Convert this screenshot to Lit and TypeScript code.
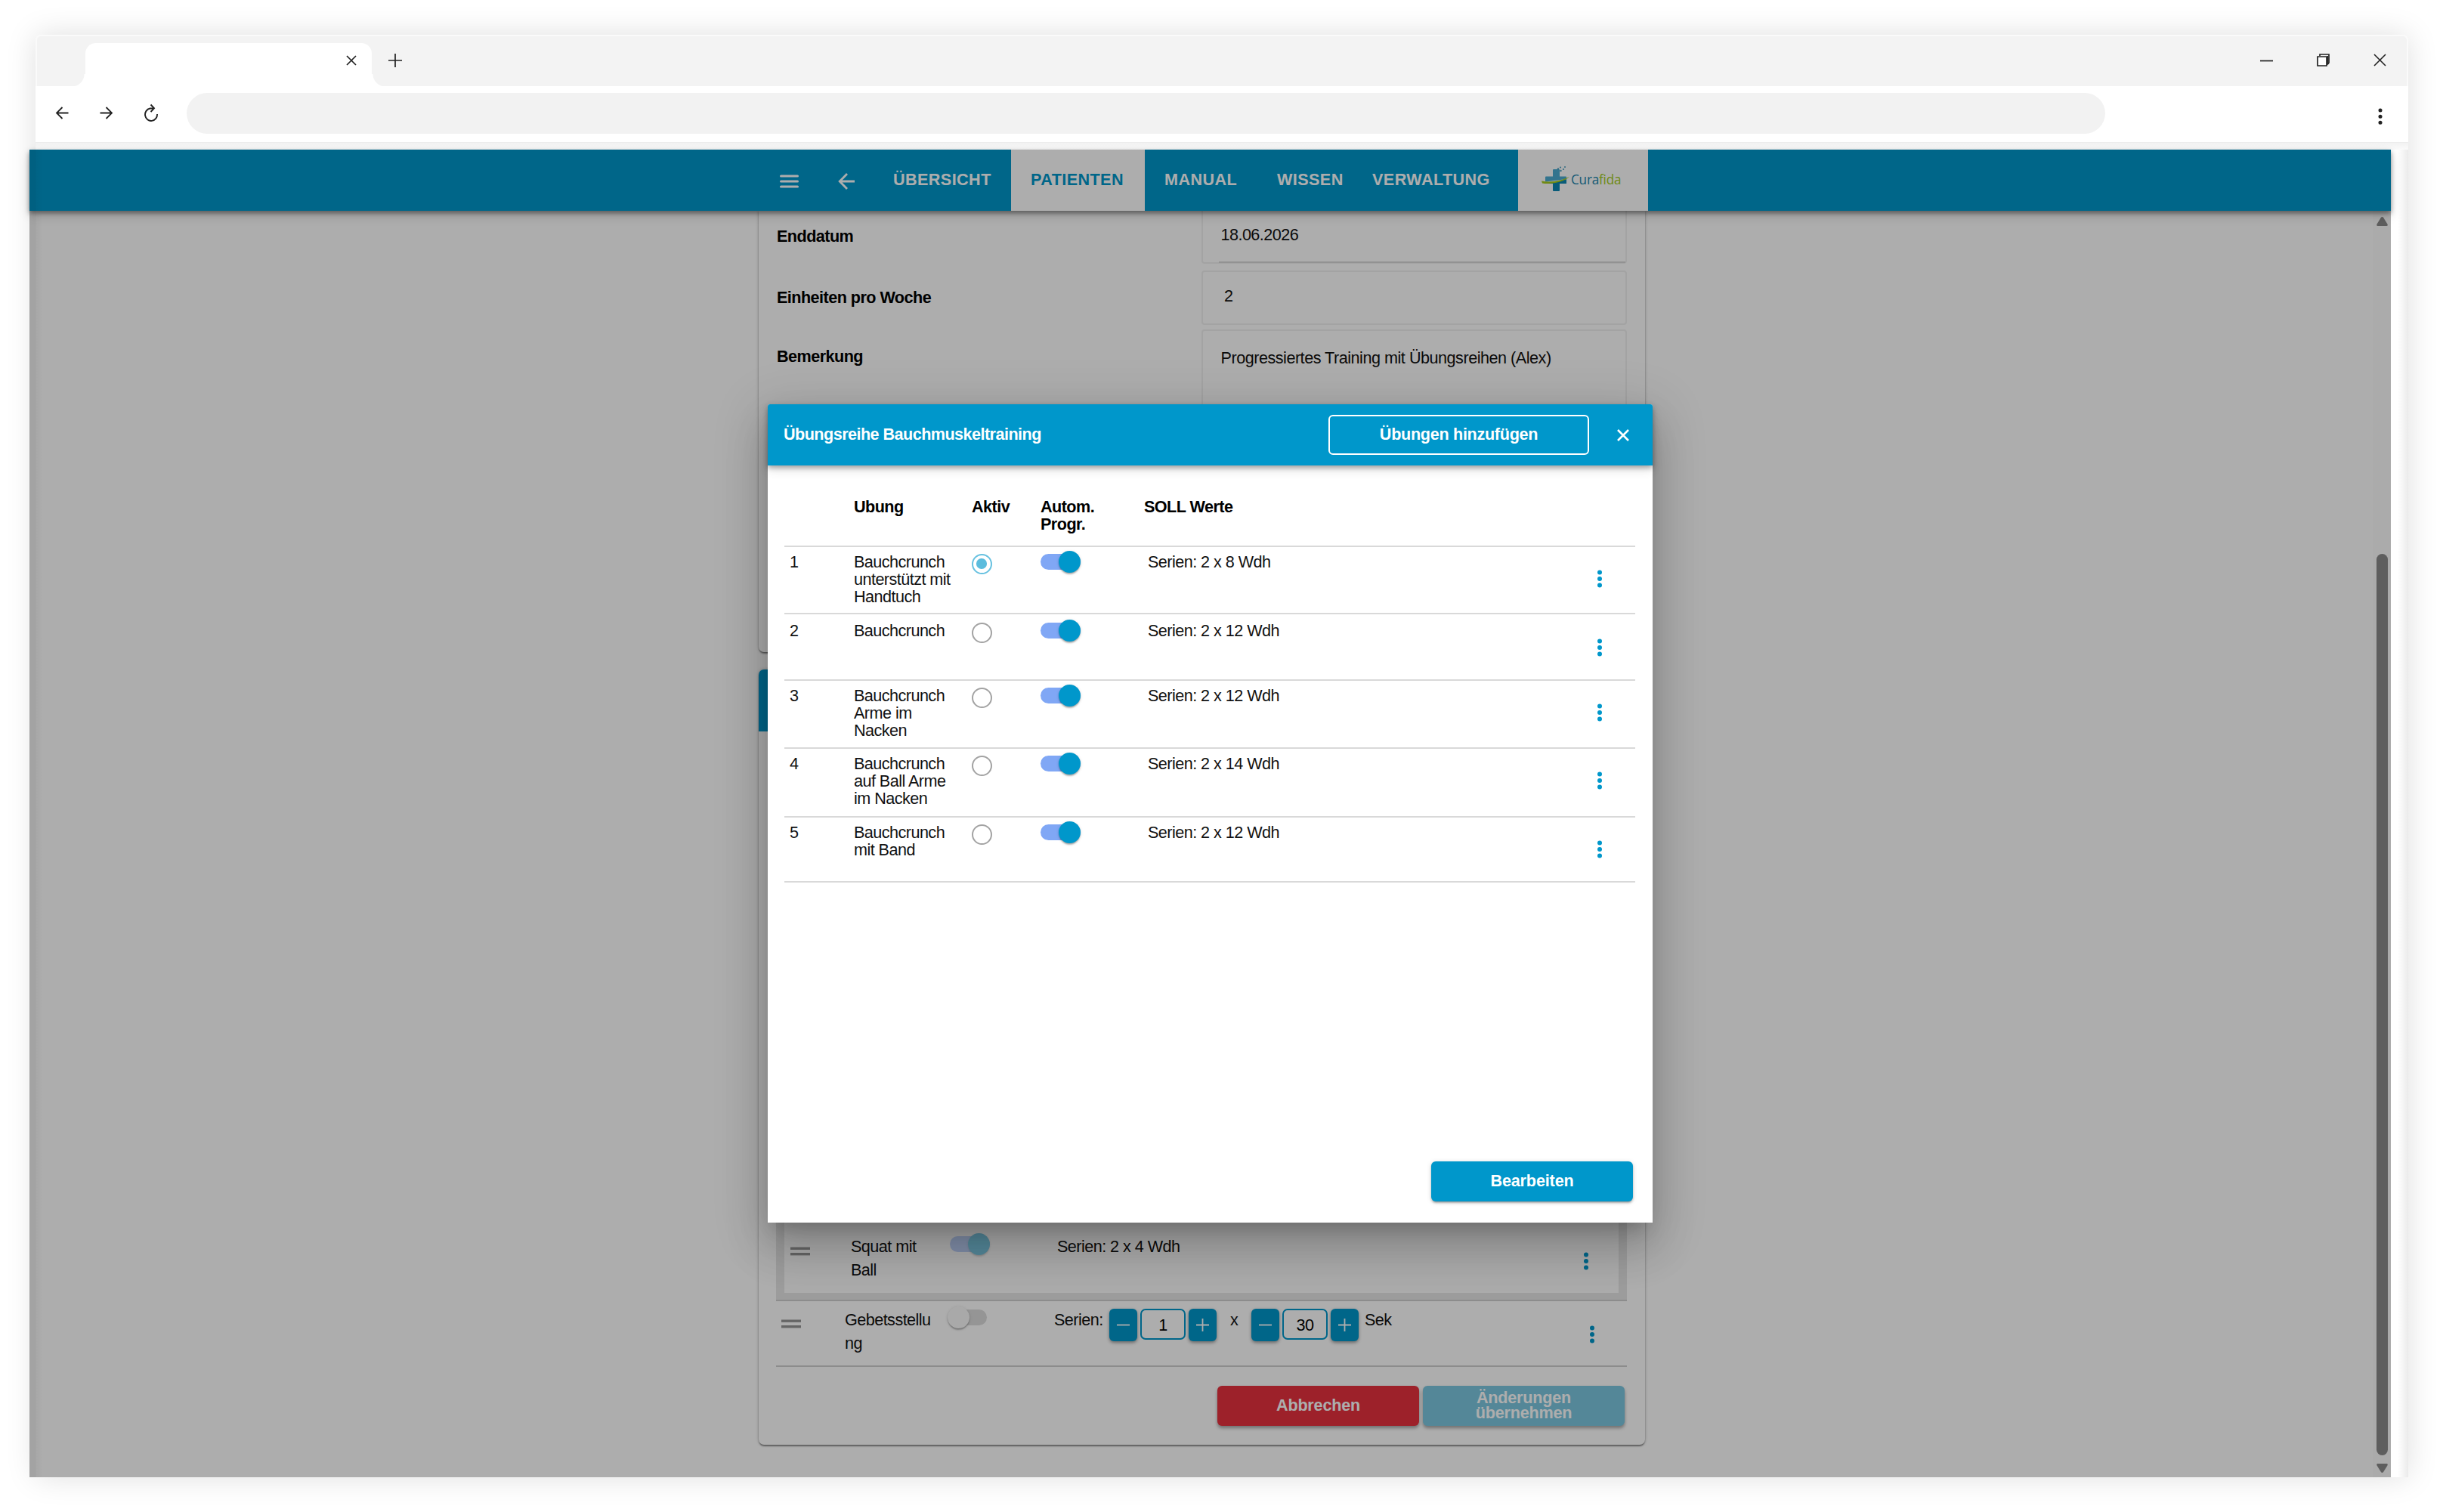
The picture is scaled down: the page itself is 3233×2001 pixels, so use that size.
import { LitElement, html, css, svg } from "lit";
import { customElement, property } from "lit/decorators.js";

interface Exercise {
  lines: string[];
  active: boolean;
  target: string;
  height: number;
  pad: number;
}

const EXERCISES: Exercise[] = [
  { lines: ["Bauchcrunch", "unterstützt mit", "Handtuch"], active: true, target: "Serien: 2 x 8 Wdh", height: 89, pad: 8 },
  { lines: ["Bauchcrunch"], active: false, target: "Serien: 2 x 12 Wdh", height: 88, pad: 10 },
  { lines: ["Bauchcrunch", "Arme im", "Nacken"], active: false, target: "Serien: 2 x 12 Wdh", height: 90, pad: 8 },
  { lines: ["Bauchcrunch", "auf Ball Arme", "im Nacken"], active: false, target: "Serien: 2 x 14 Wdh", height: 91, pad: 8 },
  { lines: ["Bauchcrunch", "mit Band"], active: false, target: "Serien: 2 x 12 Wdh", height: 86, pad: 8 },
];

const stack = (lines: string[]) => lines.map((line) => html`<div>${line}</div>`);

@customElement("more-dots")
class MoreDots extends LitElement {
  static styles = css`
    :host { display: block; width: 8px; height: 26px; }
    svg { display: block; }
  `;
  render() {
    return html`<svg width="8" height="26" viewBox="0 0 8 26" fill="#0097cb">
      <circle cx="4" cy="4.4" r="3" /><circle cx="4" cy="13" r="3" /><circle cx="4" cy="21.6" r="3" />
    </svg>`;
  }
}

@customElement("slide-toggle")
class SlideToggle extends LitElement {
  @property({ type: Boolean, reflect: true }) checked = false;
  @property({ type: Boolean, reflect: true }) disabled = false;
  static styles = css`
    :host { display: flex; align-items: center; width: 53px; height: 30px; }
    :host([disabled]) { opacity: 0.5; }
    .track { width: 53px; height: 21px; border-radius: 11px; background: #9e9e9e; display: flex; align-items: center; }
    :host(:not([checked])) .track { background: #dcdcdc; }
    :host([checked]) .track { background: #80a7f5; justify-content: flex-end; }
    .knob {
      flex: none; width: 29px; height: 29px; border-radius: 50%; background: #fafafa;
      box-shadow: 0 3px 2px -1px rgba(0,0,0,.2), 0 1px 2px rgba(0,0,0,.14), 0 1px 4px rgba(0,0,0,.12);
    }
    :host([checked]) .knob { background: #0097cb; }
  `;
  render() {
    return html`<div class="track"><div class="knob"></div></div>`;
  }
}

@customElement("number-stepper")
class NumberStepper extends LitElement {
  @property() value = "";
  static styles = css`
    :host { display: flex; gap: 4px; }
    .btn {
      width: 37px; height: 43px; border-radius: 6px; background: #0097cb; display: flex;
      align-items: center; justify-content: center; box-shadow: 0 2px 4px rgba(0,0,0,.4);
    }
    .value {
      box-sizing: border-box; width: 60px; height: 41px; border: 2px solid #0097cb; border-radius: 7px;
      text-align: center; line-height: 40px; background: #fff; color: #000;
    }
  `;
  render() {
    return html`
      <div class="btn"><svg width="19" height="19" viewBox="0 0 19 19" stroke="#fff" stroke-width="1.8"><path d="M1 9.5h17" /></svg></div>
      <div class="value">${this.value}</div>
      <div class="btn"><svg width="19" height="19" viewBox="0 0 19 19" stroke="#fff" stroke-width="1.8"><path d="M1 9.5h17M9.5 1v17" /></svg></div>
    `;
  }
}

@customElement("exercise-dialog")
class ExerciseDialog extends LitElement {
  static styles = css`
    :host {
      display: flex; flex-direction: column; background: #fff; border-radius: 3px 3px 0 0; overflow: visible;
      box-shadow: 0 16px 22px -10px rgba(0,0,0,.2), 0 35px 55px 4px rgba(0,0,0,.14), 0 13px 67px 12px rgba(0,0,0,.12);
    }
    .bar {
      height: 81px; flex: none; background: #0097cb; color: #fff; display: flex; align-items: center;
      padding: 0 31px 0 21px; box-sizing: border-box; font-weight: bold; border-radius: 3px 3px 0 0;
      box-shadow: 0 3px 6px rgba(0,0,0,.3), 0 6px 14px rgba(0,0,0,.12);
    }
    .title { flex: 1; line-height: 24px; padding-bottom: 2px; }
    .add {
      box-sizing: border-box; width: 345px; height: 53px; border: 2px solid #fff; border-radius: 6px;
      text-align: center; line-height: 47px; letter-spacing: -.3px; margin-right: 37px;
    }
    .body { flex: 1; padding: 43px 23px 0 22px; display: flex; flex-direction: column; }
    .head, .row { display: grid; grid-template-columns: 92px 155px 92px 137px 1fr 71px; line-height: 23px; }
    .head { height: 63px; font-weight: bold; }
    .row { box-sizing: border-box; border-top: 2px solid #d9d9d9; color: #111; }
    .list { border-bottom: 2px solid #d9d9d9; }
    .num { padding-left: 7px; }
    .active { padding-left: 1px; }
    .target { padding-left: 5px; }
    .head .target { padding-left: 0; }
    .radio {
      box-sizing: border-box; width: 27px; height: 27px; border-radius: 50%; border: 2px solid #a3a3a3;
      margin: 0.5px 0 0 0.5px; display: flex; align-items: center; justify-content: center;
    }
    .radio.on { border-color: #66c1e0; }
    .dot { width: 13.5px; height: 13.5px; border-radius: 50%; background: #5bbcdd; }
    slide-toggle { margin-top: -4px; }
    more-dots { margin: 21px 0 0 20px; }
    .foot { margin-top: auto; display: flex; justify-content: flex-end; padding: 0 3px 28px 0; }
    .edit {
      width: 267px; height: 53px; border-radius: 6px; background: #0097cb; color: #fff; font-weight: bold;
      text-align: center; line-height: 51px; letter-spacing: -.15px;
      box-shadow: 0 4px 2px -3px rgba(0,0,0,.2), 0 2px 3px rgba(0,0,0,.24), 0 1px 7px rgba(0,0,0,.12);
    }
  `;
  render() {
    return html`
      <div class="bar">
        <div class="title">Übungsreihe Bauchmuskeltraining</div>
        <div class="add">Übungen hinzufügen</div>
        <svg width="16" height="16" viewBox="0 0 16 16" stroke="#fff" stroke-width="2.6"><path d="M1 1l14 14M15 1L1 15" /></svg>
      </div>
      <div class="body">
        <div class="head">
          <div></div><div>Ubung</div><div class="active">Aktiv</div><div>${stack(["Autom.", "Progr."])}</div><div class="target">SOLL Werte</div>
        </div>
        <div class="list">
          ${EXERCISES.map((e, i) => html`
            <div class="row" style="height:${e.height}px;padding-top:${e.pad}px">
              <div class="num">${i + 1}</div>
              <div>${stack(e.lines)}</div>
              <div class="radio ${e.active ? "on" : ""}">${e.active ? html`<div class="dot"></div>` : ""}</div>
              <slide-toggle checked></slide-toggle>
              <div class="target">${e.target}</div>
              <more-dots></more-dots>
            </div>`)}
        </div>
        <div class="foot"><div class="edit">Bearbeiten</div></div>
      </div>
    `;
  }
}

const handle = svg`<svg width="26" height="12" viewBox="0 0 26 12" fill="#979797"><rect y="0.5" width="26" height="3.4" /><rect y="8" width="26" height="3.4" /></svg>`;

@customElement("app-root")
class AppRoot extends LitElement {
  static styles = css`
    :host {
      display: block; box-sizing: border-box; width: 3233px; height: 2001px; overflow: hidden; background: #fff;
      font: 21.6px "Liberation Sans", Arial, sans-serif; letter-spacing: -.54px; color: #000; padding: 46px 46px 46px 47px;
    }
    svg { display: block; flex: none; }
    .window { height: 1909px; border-radius: 7px 7px 0 0; box-shadow: 0 0 40px rgba(0,0,0,.13); background: #fff; display: flex; flex-direction: column; }
    .strip {
      height: 68px; flex: none; box-sizing: border-box; background: #f3f3f3; border: 2px solid #fafafa; border-bottom: 0;
      border-radius: 7px 7px 0 0; display: flex; align-items: flex-end; padding-left: 46px;
    }
    .flare { width: 18px; height: 16px; flex: none; }
    .flare.l { background: radial-gradient(circle at 0 0, transparent 16px, #fff 17px); }
    .flare.r { background: radial-gradient(circle at 100% 0, transparent 16px, #fff 17px); }
    .tab {
      width: 379px; height: 57px; box-sizing: border-box; background: #fff; border-radius: 14px 14px 0 0; display: flex; justify-content: flex-end;
      padding: 16px 20px 0 0;
    }
    .plus { align-self: flex-start; margin: 23px 0 0 4px; }
    .controls { margin-left: auto; align-self: flex-start; display: flex; align-items: center; gap: 58px; padding: 23px 27px 0 0; }
    .toolbar {
      height: 75px; flex: none; background: #fff; display: flex; align-items: center; box-sizing: border-box;
      padding: 0 34px 3px 26px; border-bottom: 1px solid #ececec;
    }
    .nav-icons { display: flex; gap: 41px; align-items: center; width: 174px; }
    .address { width: 2539px; height: 54px; border-radius: 27px; background: #f2f2f2; }
    .reload { margin-left: -1px; margin-top: -2px; }
    .menu { margin: 8px 0 0 auto; }
    .viewport { flex: 1; display: flex; flex-direction: column; padding: 9px 23px 0 0; background: linear-gradient(#f2f2f2, #fbfbfb 9px, transparent 9px), linear-gradient(90deg, #fff calc(100% - 14px), #ebebeb); }
    .page { position: relative; flex: 1; margin-left: -8px; background: #fff; display: flex; flex-direction: column; }
    .appbar {
      height: 81px; flex: none; background: #0097cb; color: #fff; font-weight: bold; display: flex; padding-left: 992px; z-index: 1;
      box-shadow: 0 3px 6px rgba(0,0,0,.4), 0 6px 14px rgba(0,0,0,.16);
    }
    .appbar .burger { margin: 33px 51px 0 0; }
    .appbar .back { margin: 31px 25px 0 0; }
    .item { box-sizing: border-box; padding: 27.5px 0 0 26px; letter-spacing: .42px; line-height: 23px; white-space: nowrap; }
    .w0 { width: 182px; }
    .w1 { width: 177px; background: #fff; color: #0097cb; }
    .w2 { width: 149px; }
    .w3 { width: 126px; }
    .w4 { width: 219px; }
    .brand { width: 172px; background: #fff; display: flex; box-sizing: border-box; padding: 20px 0 0 31px; }
    .brand-name { font: 500 19px/24px "Open Sans", sans-serif; letter-spacing: -.2px; margin: 7px 0 0 1px; color: #1e86ad; transform: scaleX(.9); transform-origin: left; }
    .fida { color: #a3cc1c; }
    .content { flex: 1; min-height: 0; display: flex; overflow: hidden; }
    .column { width: 1173px; margin: 0 auto 0 965px; display: flex; flex-direction: column; gap: 23px; height: 1633px; }
    .card {
      box-sizing: border-box; width: 1173px; border-radius: 0 0 7px 7px; background: #fff; display: flex; flex-direction: column;
      box-shadow: 0 3px 2px -1px rgba(0,0,0,.3), 0 1px 2px rgba(0,0,0,.24), 0 0 4px rgba(0,0,0,.22);
    }
    .form { height: 584px; flex: none; padding: 0 24px 0 24px; }
    .field { display: flex; }
    .label { width: 562px; font-weight: bold; line-height: 24px; }
    .box { box-sizing: border-box; width: 563px; border: 2px solid #f0f0f0; border-radius: 4px; padding-left: 23.5px; line-height: 24px; color: #111; }
    .date .label { padding-top: 22px; }
    .date .box { height: 70px; border-top: 0; padding: 0 0 0 21px; border-radius: 0 0 4px 4px; }
    .date .inner { height: 69px; box-sizing: border-box; border-bottom: 2px solid #d8d8d8; padding: 20px 0 0 2.5px; }
    .units { margin-top: 9px; }
    .units .label { padding-top: 24px; }
    .units .box { height: 72px; padding: 20px 0 0 28px; }
    .note { margin-top: 6px; }
    .note .label { padding-top: 24px; }
    .note .box { height: 400px; padding-top: 24px; letter-spacing: -.48px; }
    .plan { flex: 1; border-radius: 7px; }
    .plan-head { height: 82px; background: #0097cb; border-radius: 7px 7px 0 0; }
    .plan-rows { margin-top: auto; padding: 0 24px 0 23px; }
    .plan-row { box-sizing: border-box; display: flex; border-bottom: 2px solid #cfcfcf; line-height: 31px; color: #111; }
    .selected { height: 107px; border: 11px solid #e6e6e6; border-bottom: 0; background: #fdfdfd; padding-top: 19px; }
    .selected-end { height: 11px; background: #e6e6e6; border-bottom: 2px solid #cfcfcf; box-sizing: border-box; }
    .grip { box-sizing: border-box; flex: none; }
    .selected .grip { padding: 16px 0 0 8px; width: 88px; }
    .selected .name { width: 131px; }
    .selected slide-toggle { margin: -3px 89px 0 0; width: 53px; }
    .selected more-dots { margin: 22px 39px 0 auto; }
    .plain { height: 87px; padding-top: 9px; }
    .plain .grip { padding: 15px 0 0 7px; width: 91px; }
    .plain .name { width: 136px; white-space: nowrap; line-height: 31px; }
    .plain slide-toggle { margin: -3px 89px 0 0; width: 52px; }
    .plain number-stepper { line-height: 24px; margin-top: 1px; }
    .serie { width: 73px; }
    .times { width: 46px; box-sizing: border-box; padding-left: 18px; }
    .sek { padding-left: 8px; }
    .plain more-dots { margin: 22px 42px 0 auto; }
    .actions { display: flex; justify-content: flex-end; gap: 5px; padding: 25px 27px 25px 0; font-weight: bold; color: #fff; text-align: center; letter-spacing: -.2px; }
    .action { width: 267px; height: 53px; border-radius: 6px; box-shadow: 0 3px 4px rgba(0,0,0,.35); }
    .cancel { background: #e8323f; line-height: 51px; }
    .apply { background: #7dc8e1; line-height: 20px; padding-top: 6px; box-sizing: border-box; }
    .scroll { width: 24px; background: #fcfcfc; display: flex; flex-direction: column; align-items: center; padding: 8px 0 6px; box-sizing: border-box; }
    .thumb { width: 15px; border-radius: 8px; background: #8b8b8b; height: 1193px; margin: auto 0 11px; }
    .backdrop { position: absolute; inset: 0; z-index: 2; background: rgba(0,0,0,.32); overflow: hidden; }
    .edge { position: absolute; left: 0; top: 0; bottom: 0; width: 18px; z-index: 3; background: linear-gradient(90deg, rgba(0,0,0,.06) 8px, rgba(0,0,0,.03) 9px, transparent); }
    exercise-dialog { position: absolute; left: 977px; top: 337px; width: 1171px; height: 1083px; z-index: 3; }
  `;

  private chrome() {
    return html`
      <div class="strip">
        <div class="flare l"></div>
        <div class="tab"><svg width="14" height="14" viewBox="0 0 14 14" stroke="#222" stroke-width="1.7"><path d="M1 1l12 12M13 1L1 13" /></svg></div>
        <div class="flare r"></div>
        <svg class="plus" width="18" height="18" viewBox="0 0 18 18" stroke="#222" stroke-width="1.7"><path d="M0 9h18M9 0v18" /></svg>
        <div class="controls">
          <svg width="17" height="17" viewBox="0 0 17 17" stroke="#222" stroke-width="1.7"><path d="M0 9.500h17" /></svg>
          <svg width="17" height="17" viewBox="0 0 17 17" stroke="#222" stroke-width="1.7" fill="none"><path d="M1 4h12v12H1z" fill="#fff" /><path d="M4 3V1h12v11l-2 2.500" /><path d="M14.500 3v11" stroke-width="1.4" /></svg>
          <svg width="17" height="17" viewBox="0 0 17 17" stroke="#222" stroke-width="1.6"><path d="M1 1l15 15M16 1L1 16" /></svg>
        </div>
      </div>
      <div class="toolbar">
        <div class="nav-icons">
          <svg width="18" height="17" viewBox="0 0 18 17" stroke="#222" stroke-width="1.8" fill="none"><path d="M17.500 8.500H2M9.500 1L2 8.500l7.500 7.500" /></svg>
          <svg width="18" height="17" viewBox="0 0 18 17" stroke="#222" stroke-width="1.8" fill="none"><path d="M0.500 8.500H16M8.500 1L16 8.500 8.500 16" /></svg>
          <svg class="reload" width="20" height="24" viewBox="0 0 20 24" stroke="#222" stroke-width="1.9" fill="none"><path d="M14 6.500H8.500A8 8.300 0 1 0 18 14M9.500 1.500L14 6.300 9.500 11" /></svg>
        </div>
        <div class="address"></div>
        <svg class="menu" width="6" height="24" viewBox="0 0 6 24" fill="#222"><circle cx="3" cy="4" r="2.500" /><circle cx="3" cy="12.200" r="2.500" /><circle cx="3" cy="20.300" r="2.500" /></svg>
      </div>
    `;
  }

  private appbar() {
    const names = ["ÜBERSICHT", "PATIENTEN", "MANUAL", "WISSEN", "VERWALTUNG"];
    return html`
      <div class="appbar">
        <svg class="burger" width="27" height="18" viewBox="0 0 27 18" stroke="#fff" stroke-width="3" stroke-linecap="round"><path d="M2.500 2h22M2.500 9h22M2.500 16h22" /></svg>
        <svg class="back" width="22" height="22" viewBox="0 0 22 22" stroke="#fff" stroke-width="2.800" fill="none"><path d="M22 11H2.500M12 1L2.200 11l9.800 10" /></svg>
        ${names.map((name, i) => html`<div class="item w${i}">${name}</div>`)}
        <div class="brand">
          <svg width="38" height="36" viewBox="0 0 38 36">
            <path d="M16 6h7q1 0 1 1v8.500h8q1 0 1 1V19L5 22.500v-6q0-1 1-1h9V7q0-1 1-1z" fill="#4cacd2" />
            <path d="M5 24c12 0 19-2 28-5v6H24v9q0 1-1 1h-7q-1 0-1-1v-9H5z" fill="#0d86b3" />
            <path d="M0 21.500c14 2.500 26-.5 37-5.500-8 6.500-22 10.500-36 8.500z" fill="#a5cc1e" />
            <g fill="#4c9fc0"><circle cx="22" cy="5.500" r="1.200" /><circle cx="25" cy="3.500" r="1.100" /><circle cx="25.500" cy="8" r="1.200" /><circle cx="29" cy="6" r="1.100" /><circle cx="31" cy="3" r="1" /></g>
          </svg>
          <div class="brand-name">Cura<span class="fida">fida</span></div>
        </div>
      </div>
    `;
  }

  private form() {
    return html`
      <div class="card form">
        <div class="field date"><div class="label">Enddatum</div><div class="box"><div class="inner">18.06.2026</div></div></div>
        <div class="field units"><div class="label">Einheiten pro Woche</div><div class="box">2</div></div>
        <div class="field note"><div class="label">Bemerkung</div><div class="box">Progressiertes Training mit Übungsreihen (Alex)</div></div>
      </div>
    `;
  }

  private plan() {
    return html`
      <div class="card plan">
        <div class="plan-head"></div>
        <div class="plan-rows">
          <div class="plan-row selected">
            <div class="grip">${handle}</div>
            <div class="name">${stack(["Squat mit", "Ball"])}</div>
            <slide-toggle checked disabled></slide-toggle>
            <div>Serien: 2 x 4 Wdh</div>
            <more-dots></more-dots>
          </div>
          <div class="selected-end"></div>
          <div class="plan-row plain">
            <div class="grip">${handle}</div>
            <div class="name">${stack(["Gebetsstellu", "ng"])}</div>
            <slide-toggle></slide-toggle>
            <div class="serie">Serien:</div>
            <number-stepper value="1"></number-stepper>
            <div class="times">x</div>
            <number-stepper value="30"></number-stepper>
            <div class="sek">Sek</div>
            <more-dots></more-dots>
          </div>
        </div>
        <div class="actions">
          <div class="action cancel">Abbrechen</div>
          <div class="action apply">${stack(["Änderungen", "übernehmen"])}</div>
        </div>
      </div>
    `;
  }

  render() {
    return html`
      <div class="window">
        ${this.chrome()}
        <div class="viewport">
          <div class="page">
            ${this.appbar()}
            <div class="content">
              <div class="column">${this.form()}${this.plan()}</div>
              <div class="scroll">
                <svg width="15" height="12" viewBox="0 0 15 12" fill="#8b8b8b"><path d="M7.500 0q1 0 1.800 1.200l5 8Q15.500 12 13.500 12h-12Q-.5 12 .7 9.200l5-8Q6.500 0 7.500 0z" /></svg>
                <div class="thumb"></div>
                <svg width="15" height="12" viewBox="0 0 15 12" fill="#8b8b8b"><path d="M7.500 12q1 0 1.800-1.200l5-8Q15.500 0 13.500 0h-12Q-.5 0 .7 2.800l5 8Q6.500 12 7.500 12z" /></svg>
              </div>
            </div>
            <div class="backdrop"><exercise-dialog></exercise-dialog></div>
            <div class="edge"></div>
          </div>
        </div>
      </div>
    `;
  }
}
